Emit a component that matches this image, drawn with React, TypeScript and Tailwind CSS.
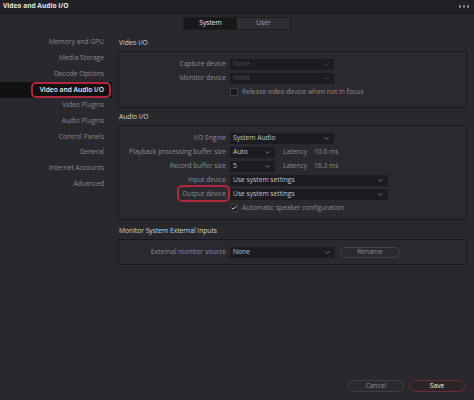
import { ChevronDown, Check } from 'lucide-react';

const sidebarItems = [
  'Memory and GPU',
  'Media Storage',
  'Decode Options',
  'Video and Audio I/O',
  'Video Plugins',
  'Audio Plugins',
  'Control Panels',
  'General',
  'Internet Accounts',
  'Advanced',
];

function Select({ value, width, disabled = false }: { value: string; width: string; disabled?: boolean }) {
  return (
    <div
      className={`${width} h-[11px] bg-[#1c1c20] flex items-center justify-between pl-[3px] pr-[4px] ${
        disabled ? 'text-[#505055]' : 'text-[#c4c4c8]'
      }`}
    >
      <span>{value}</span>
      <ChevronDown size={7} strokeWidth={2.5} className={disabled ? 'text-[#505055]' : 'text-[#9a9a9e]'} />
    </div>
  );
}

function Row({ label, children, outlined = false }: { label?: string; children: React.ReactNode; outlined?: boolean }) {
  return (
    <div className="h-[14px] flex items-center">
      <div className="w-[110px] shrink-0 text-right pr-[3px] text-[#8e8e93] whitespace-nowrap">
        <span className="relative">
          {label}
          {outlined && (
            <span className="absolute left-[-5px] right-[-4px] top-[-4px] bottom-[-4px] border-2 border-[#b0283e] rounded-[5px]" />
          )}
        </span>
      </div>
      <div className="flex items-center gap-[8px] pl-[1px] whitespace-nowrap">{children}</div>
    </div>
  );
}

function Checkbox({ checked, label }: { checked: boolean; label: string }) {
  return (
    <div className="flex items-center gap-[4px]">
      <div className="w-[8px] h-[8px] bg-[#1a1a1e] border border-[#3e3e43] flex items-center justify-center">
        {checked && <Check size={8} strokeWidth={3.5} className="text-white" />}
      </div>
      <span className="text-[#8e8e93]">{label}</span>
    </div>
  );
}

function Section({ title, children, className = '' }: { title: string; children: React.ReactNode; className?: string }) {
  return (
    <div className={className}>
      <div className="h-[13px] flex items-center pl-[1px] text-[#d6d6da]">{title}</div>
      <div className="mt-[1px] border border-[#1a1a1e] bg-[#29292e]">{children}</div>
    </div>
  );
}

export default function App() {
  return (
    <div
      className="w-[474px] h-[400px] bg-[#28282d] flex flex-col text-[6.7px] leading-none overflow-hidden"
      style={{ fontFamily: '"Open Sans", "Noto Sans", sans-serif' }}
    >
      <div className="h-[14px] shrink-0 bg-[#212125] border-b border-[#161619] flex items-center justify-between pl-[3px] pr-[5px]">
        <span className="font-bold text-[#e4e4e8] text-[6.6px]">Video and Audio I/O</span>
        <span className="flex gap-[1.5px]">
          <span className="w-[2.5px] h-[2.5px] rounded-full bg-[#8a8a8e]" />
          <span className="w-[2.5px] h-[2.5px] rounded-full bg-[#8a8a8e]" />
          <span className="w-[2.5px] h-[2.5px] rounded-full bg-[#8a8a8e]" />
        </span>
      </div>

      <div className="mt-[3px] flex justify-center">
        <div className="flex h-[13px] border border-[#1c1c20] rounded-[2px] overflow-hidden">
          <div className="w-[53px] bg-[#18181b] text-[#e6e6ea] flex items-center justify-center">System</div>
          <div className="w-[53px] bg-[#2e2e33] text-[#a0a0a5] flex items-center justify-center">User</div>
        </div>
      </div>

      <div className="mt-[5px] flex">
        <div className="w-[112px] shrink-0">
          {sidebarItems.map((item) => {
            const active = item === 'Video and Audio I/O';
            return (
              <div
                key={item}
                className={`h-[15.7px] flex items-center justify-end pr-[8px] whitespace-nowrap ${
                  active ? 'bg-[#111113] text-[#f2f2f4] font-semibold' : 'text-[#8a8a8f]'
                }`}
              >
                <span className="relative">
                  {item}
                  {active && (
                    <span className="absolute left-[-9px] right-[-7px] top-[-5px] bottom-[-5px] border-2 border-[#b0283e] rounded-[5px]" />
                  )}
                </span>
              </div>
            );
          })}
        </div>

        <div className="ml-[6px] w-[349px]">
          <Section title="Video I/O" className="mt-[2px]">
            <div className="pt-[5px] pb-[8px]">
              <Row label="Capture device">
                <Select value="None" width="w-[104px]" disabled />
              </Row>
              <Row label="Monitor device">
                <Select value="None" width="w-[104px]" disabled />
              </Row>
              <Row>
                <Checkbox checked={false} label="Release video device when not in focus" />
              </Row>
            </div>
          </Section>

          <Section title="Audio I/O" className="mt-[3px]">
            <div className="pt-[5px] pb-[4px]">
              <Row label="I/O Engine">
                <Select value="System Audio" width="w-[104px]" />
              </Row>
              <Row label="Playback processing buffer size">
                <Select value="Auto" width="w-[45px]" />
                <span className="text-[#8e8e93]">Latency</span>
                <span className="text-[#8e8e93] -ml-[1px]">10.0 ms</span>
              </Row>
              <Row label="Record buffer size">
                <Select value="5" width="w-[45px]" />
                <span className="text-[#8e8e93]">Latency</span>
                <span className="text-[#8e8e93] -ml-[1px]">16.3 ms</span>
              </Row>
              <Row label="Input device">
                <Select value="Use system settings" width="w-[158px]" />
              </Row>
              <Row label="Output device" outlined>
                <Select value="Use system settings" width="w-[158px]" />
              </Row>
              <Row>
                <Checkbox checked label="Automatic speaker configuration" />
              </Row>
            </div>
          </Section>

          <Section title="Monitor System External Inputs" className="mt-[5px]">
            <div className="py-[5px]">
              <Row label="External monitor source">
                <Select value="None" width="w-[105px]" />
                <div className="-ml-[3px] w-[60px] h-[11px] rounded-full border border-[#444449] text-[#8e8e93] flex items-center justify-center">
                  Rename
                </div>
              </Row>
            </div>
          </Section>
        </div>
      </div>

      <div className="flex-1" />

      <div className="flex justify-end gap-[5px] pr-[9px] pb-[8px]">
        <div className="w-[56px] h-[12px] rounded-full border border-[#404045] bg-[#2a2a2f] text-[#8e8e93] flex items-center justify-center">
          Cancel
        </div>
        <div className="w-[56px] h-[12px] rounded-full border border-[#6a2a36] bg-[#2b2528] text-[#f0f0f2] flex items-center justify-center">
          Save
        </div>
      </div>
    </div>
  );
}
